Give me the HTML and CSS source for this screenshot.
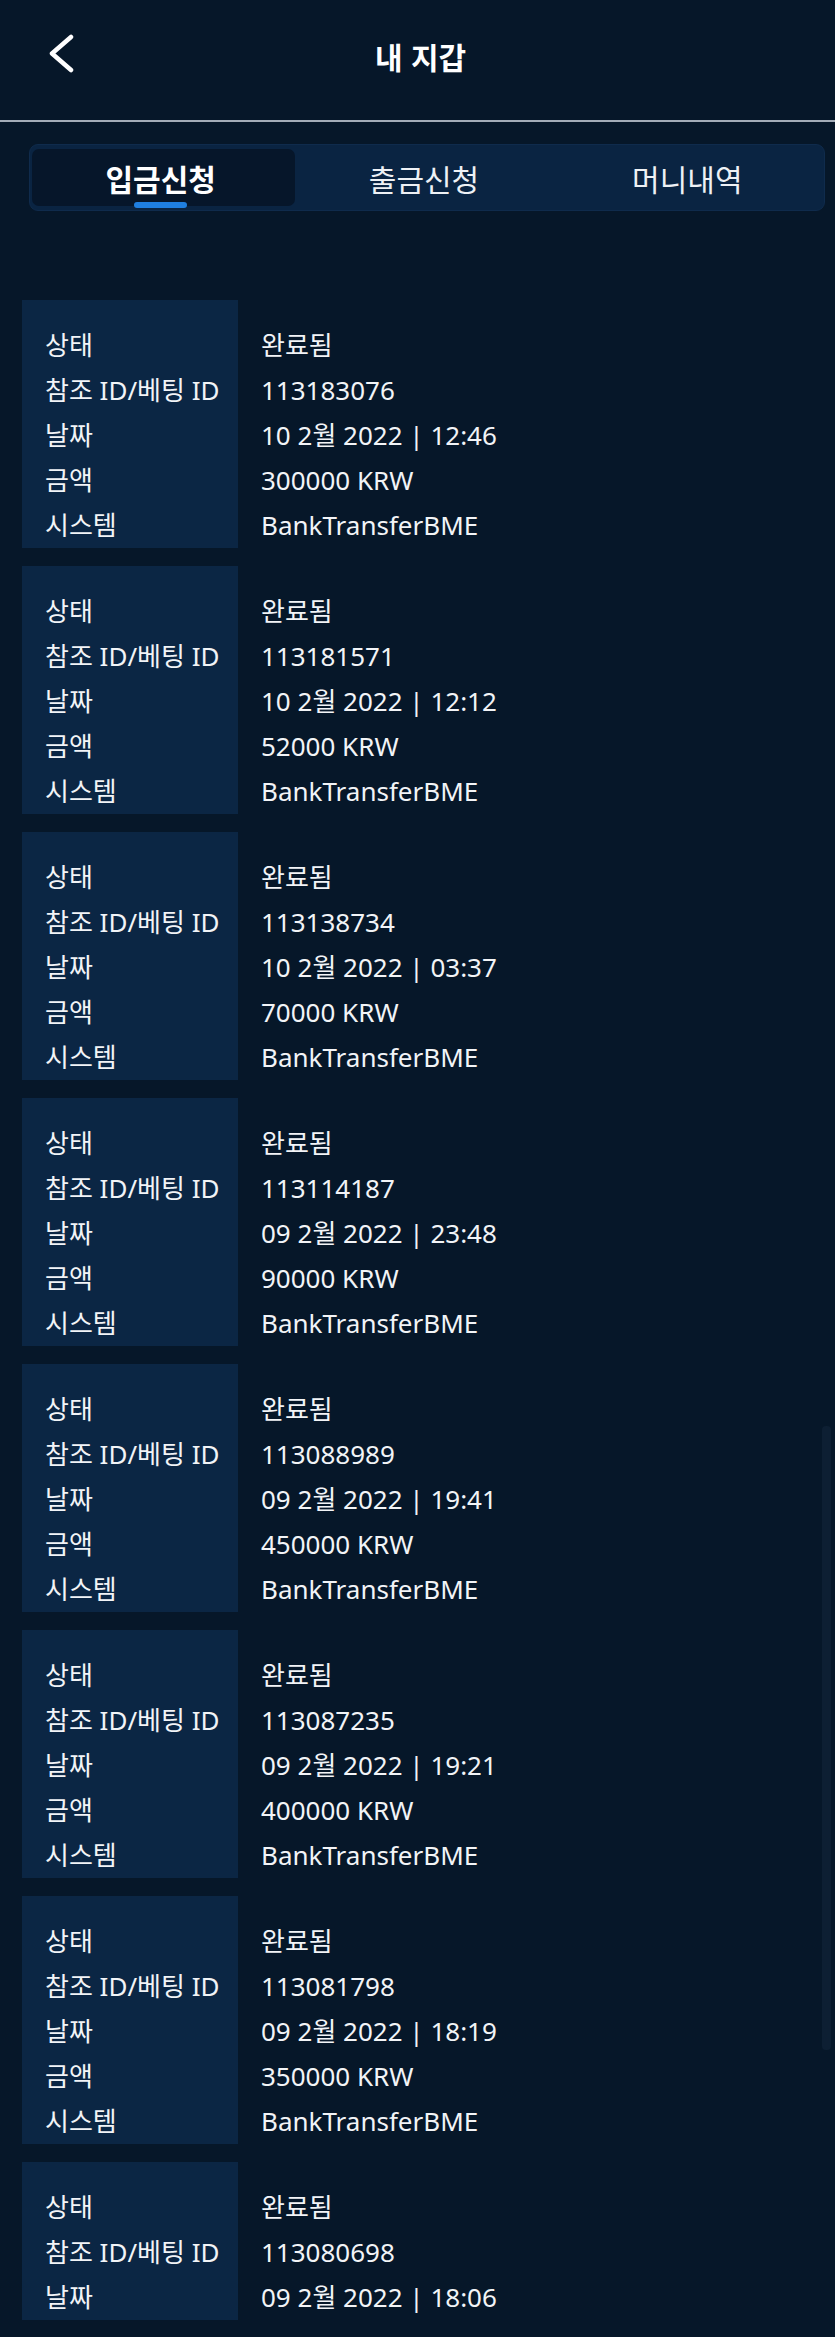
FILE: index.html
```html
<!DOCTYPE html>
<html lang="ko">
<head>
<meta charset="utf-8">
<title>내 지갑</title>
<link rel="stylesheet" href="styles.css">
</head>
<body>
<header class="topbar">
  <button class="back" aria-label="뒤로">
    <svg width="30" height="40" viewBox="0 0 30 40"><polyline points="25,3 6,19.5 25,36" fill="none" stroke="#ffffff" stroke-width="4.5" stroke-linecap="round" stroke-linejoin="round"/></svg>
  </button>
  <h1 class="title">내 지갑</h1>
  <span class="spacer"></span>
</header>
<div class="divider"></div>

<nav class="tabs">
  <div class="tab active"><span class="tab-label">입금신청</span></div>
  <div class="tab"><span class="tab-label">출금신청</span></div>
  <div class="tab"><span class="tab-label">머니내역</span></div>
</nav>

<main class="list">
  <section class="card">
    <div class="labels"><div>상태</div><div>참조 ID/베팅 ID</div><div>날짜</div><div>금액</div><div>시스템</div></div>
    <div class="values"><div>완료됨</div><div>113183076</div><div>10 2월 2022 | 12:46</div><div>300000 KRW</div><div>BankTransferBME</div></div>
  </section>
  <section class="card">
    <div class="labels"><div>상태</div><div>참조 ID/베팅 ID</div><div>날짜</div><div>금액</div><div>시스템</div></div>
    <div class="values"><div>완료됨</div><div>113181571</div><div>10 2월 2022 | 12:12</div><div>52000 KRW</div><div>BankTransferBME</div></div>
  </section>
  <section class="card">
    <div class="labels"><div>상태</div><div>참조 ID/베팅 ID</div><div>날짜</div><div>금액</div><div>시스템</div></div>
    <div class="values"><div>완료됨</div><div>113138734</div><div>10 2월 2022 | 03:37</div><div>70000 KRW</div><div>BankTransferBME</div></div>
  </section>
  <section class="card">
    <div class="labels"><div>상태</div><div>참조 ID/베팅 ID</div><div>날짜</div><div>금액</div><div>시스템</div></div>
    <div class="values"><div>완료됨</div><div>113114187</div><div>09 2월 2022 | 23:48</div><div>90000 KRW</div><div>BankTransferBME</div></div>
  </section>
  <section class="card">
    <div class="labels"><div>상태</div><div>참조 ID/베팅 ID</div><div>날짜</div><div>금액</div><div>시스템</div></div>
    <div class="values"><div>완료됨</div><div>113088989</div><div>09 2월 2022 | 19:41</div><div>450000 KRW</div><div>BankTransferBME</div></div>
  </section>
  <section class="card">
    <div class="labels"><div>상태</div><div>참조 ID/베팅 ID</div><div>날짜</div><div>금액</div><div>시스템</div></div>
    <div class="values"><div>완료됨</div><div>113087235</div><div>09 2월 2022 | 19:21</div><div>400000 KRW</div><div>BankTransferBME</div></div>
  </section>
  <section class="card">
    <div class="labels"><div>상태</div><div>참조 ID/베팅 ID</div><div>날짜</div><div>금액</div><div>시스템</div></div>
    <div class="values"><div>완료됨</div><div>113081798</div><div>09 2월 2022 | 18:19</div><div>350000 KRW</div><div>BankTransferBME</div></div>
  </section>
  <section class="card">
    <div class="labels"><div>상태</div><div>참조 ID/베팅 ID</div><div>날짜</div></div>
    <div class="values"><div>완료됨</div><div>113080698</div><div>09 2월 2022 | 18:06</div></div>
  </section>
  <div class="scroll-thumb"></div>
</main>
</body>
</html>
```
FILE: styles.css
```css
html {
  background: #061729;
}
body {
  margin: 0;
  width: 835px;
  min-height: 2337px;
  background: #061729;
  color: #f2f4f7;
  font-family: "Noto Sans", "Noto Sans CJK KR", sans-serif;
}

.topbar {
  display: grid;
  grid-template-columns: 110px 1fr 110px;
  align-items: center;
  height: 112px;
  padding-bottom: 8px;
}
.back {
  background: none;
  border: 0;
  padding: 0;
  margin-left: 46px;
  margin-top: -5px;
  width: 30px;
  height: 40px;
  display: flex;
}
.title {
  margin: 0;
  text-align: center;
  font-family: "Noto Sans CJK KR", sans-serif;
  font-weight: 700;
  font-size: 30px;
  line-height: 40px;
  color: #ffffff;
  padding-left: 6px;
}
.divider {
  height: 2px;
  background: #a3acb8;
}

.tabs {
  display: flex;
  margin: 22px 10px 0 29px;
  height: 57px;
  padding: 4px 2px 4px 2px;
  background: #0a2442;
  border: 1px solid #0f2b4c;
  border-radius: 9px;
}
.tab {
  flex: 1;
  display: flex;
  align-items: center;
  justify-content: center;
  border-radius: 7px;
}
.tab.active {
  background: #06162a;
}
.tab-label {
  position: relative;
  font-family: "Noto Sans CJK KR", sans-serif;
  font-size: 30px;
  line-height: 40px;
  color: #eef1f5;
  margin-right: 6px;
}
.tab.active .tab-label {
  font-weight: 700;
  color: #ffffff;
}
.tab.active .tab-label::after {
  content: "";
  position: absolute;
  left: 50%;
  bottom: -10px;
  width: 53px;
  height: 6px;
  margin-left: -27px;
  border-radius: 3px;
  background: #1f7fe0;
}

.list {
  position: relative;
  margin-top: 89px;
  padding-left: 22px;
  display: flex;
  flex-direction: column;
  gap: 18px;
}
.card {
  display: grid;
  grid-template-columns: 216px 1fr;
  font-size: 26px;
  line-height: 45px;
}
.labels {
  background: #0b2644;
  padding: 23px 0 0 23px;
  white-space: nowrap;
}
.values {
  padding: 23px 0 0 23px;
  white-space: nowrap;
}
.scroll-thumb {
  position: absolute;
  right: 4px;
  top: 1126px;
  width: 9px;
  height: 624px;
  border-radius: 4px;
  background: #0d1f33;
}
```
